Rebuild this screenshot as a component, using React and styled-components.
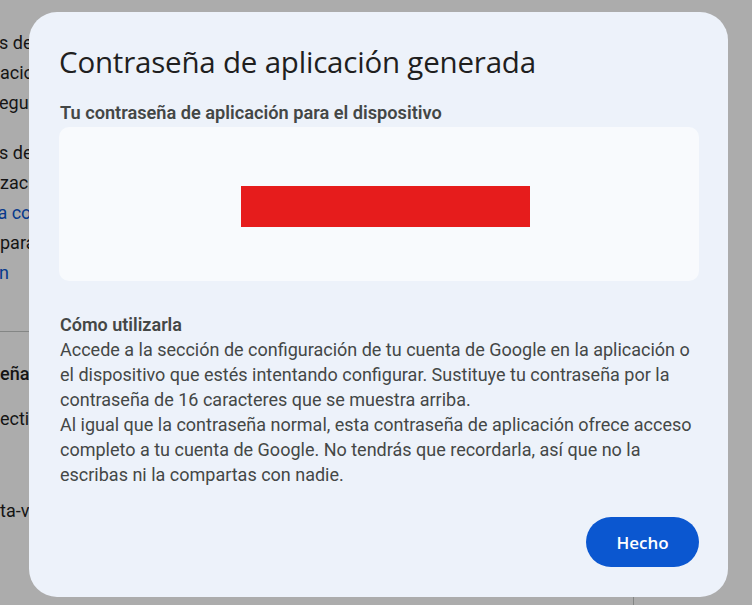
import styled, { createGlobalStyle } from "styled-components";

//------------------------------------  STYLES  ------------------------------------//
const GlobalStyle = createGlobalStyle`
    html, body {
        margin: 0;
        padding: 0;
        background: #ffffff;
        overflow: hidden;
    }
`;

const Page = styled.div`
    position: relative;
    width: 752px;
    height: 605px;
    overflow: hidden;
    background: #ffffff;
    font-family: Roboto, "Liberation Sans", sans-serif;
`;

const BgColumn = styled.div`
    display: flex;
    flex-direction: column;
    padding-top: 28px;
    width: 640px;
`;

const BgPara = styled.div`
    display: flex;
    flex-direction: column;
    margin-bottom: 20px;
`;

const BgLine = styled.div`
    white-space: nowrap;
    font-size: 18px;
    line-height: 30px;
    color: ${(p) => (p.$link ? "#0b57d0" : "#1f1f1f")};
    margin-left: ${(p) => p.$shift || 0}px;
`;

const BgDivider = styled.div`
    height: 1px;
    background: #c4c7c5;
    margin-top: 23px;
`;

const BgItem = styled.div`
    white-space: nowrap;
    font-size: 18px;
    font-weight: ${(p) => (p.$strong ? 500 : 400)};
    color: #1f1f1f;
    line-height: 24px;
    margin-left: ${(p) => p.$shift || 0}px;
    margin-top: ${(p) => p.$gap}px;
`;

const BgRule = styled.div`
    position: absolute;
    left: 633px;
    top: 331px;
    width: 1px;
    height: 274px;
    background: #c4c7c5;
`;

const Scrim = styled.div`
    position: absolute;
    inset: 0;
    background: rgba(0, 0, 0, 0.325);
`;

const Dialog = styled.div`
    position: absolute;
    left: 29px;
    top: 12px;
    width: 699px;
    height: 585px;
    box-sizing: border-box;
    padding: 31px 29px 30px 30px;
    background: #edf2fa;
    border-radius: 28px;
    display: flex;
    flex-direction: column;
`;

const Title = styled.h1`
    margin: 0;
    font-family: "Open Sans", Roboto, sans-serif;
    font-weight: 400;
    font-size: 29.5px;
    line-height: 38px;
    color: #1f1f1f;
    letter-spacing: -0.2px;
`;

const Label = styled.div`
    margin-top: 20px;
    font-size: 18.2px;
    font-weight: 600;
    line-height: 24px;
    color: #444746;
    padding-left: 1px;
`;

const PasswordBox = styled.div`
    margin-top: 2px;
    height: 154px;
    background: #f8fafd;
    border-radius: 10px;
    display: flex;
    align-items: center;
    justify-content: center;
    padding-left: 13px;
    padding-top: 5px;
    box-sizing: border-box;
`;

const Redacted = styled.div`
    width: 289px;
    height: 41px;
    background: #e61c1c;
`;

const HowTo = styled.div`
    margin-top: 31px;
    padding-left: 1px;
    color: #444746;
    font-size: 18px;
    line-height: 25px;
`;

const HowToTitle = styled.div`
    font-weight: 600;
`;

const Paragraph = styled.p`
    margin: 0;
`;

const Actions = styled.div`
    margin-top: auto;
    display: flex;
    justify-content: flex-end;
`;

const Button = styled.button`
    width: 113px;
    height: 50px;
    border: none;
    border-radius: 25px;
    background: #0b57d0;
    color: #ffffff;
    font-family: "Open Sans", Roboto, sans-serif;
    font-size: 17px;
    font-weight: 600;
    cursor: pointer;
`;

//------------------------------------  COMPONENT DEVELOPMENT  ------------------------------------//
const App = () => {
    return (
        <Page>
            <GlobalStyle />
            <BgColumn>
                <BgPara>
                    <BgLine $shift={-1}>s de</BgLine>
                    <BgLine>acion</BgLine>
                    <BgLine $shift={-1}>egur</BgLine>
                </BgPara>
                <BgPara>
                    <BgLine $shift={-1}>s de</BgLine>
                    <BgLine>zaci</BgLine>
                    <BgLine $link $shift={-7}>la co</BgLine>
                    <BgLine>para</BgLine>
                    <BgLine $link $shift={-1}>n</BgLine>
                </BgPara>
                <BgDivider />
                <BgItem $strong $gap={30}>eña</BgItem>
                <BgItem $gap={21}>ectiv</BgItem>
                <BgItem $gap={68}>ta-v</BgItem>
            </BgColumn>
            <BgRule />
            <Scrim />
            <Dialog>
                <Title>Contraseña de aplicación generada</Title>
                <Label>Tu contraseña de aplicación para el dispositivo</Label>
                <PasswordBox>
                    <Redacted />
                </PasswordBox>
                <HowTo>
                    <HowToTitle>Cómo utilizarla</HowToTitle>
                    <Paragraph>
                        Accede a la sección de configuración de tu cuenta de Google en la aplicación o
                        el dispositivo que estés intentando configurar. Sustituye tu contraseña por la
                        contraseña de 16 caracteres que se muestra arriba.
                    </Paragraph>
                    <Paragraph>
                        Al igual que la contraseña normal, esta contraseña de aplicación ofrece acceso
                        completo a tu cuenta de Google. No tendrás que recordarla, así que no la
                        escribas ni la compartas con nadie.
                    </Paragraph>
                </HowTo>
                <Actions>
                    <Button>Hecho</Button>
                </Actions>
            </Dialog>
        </Page>
    );
};

export default App;
